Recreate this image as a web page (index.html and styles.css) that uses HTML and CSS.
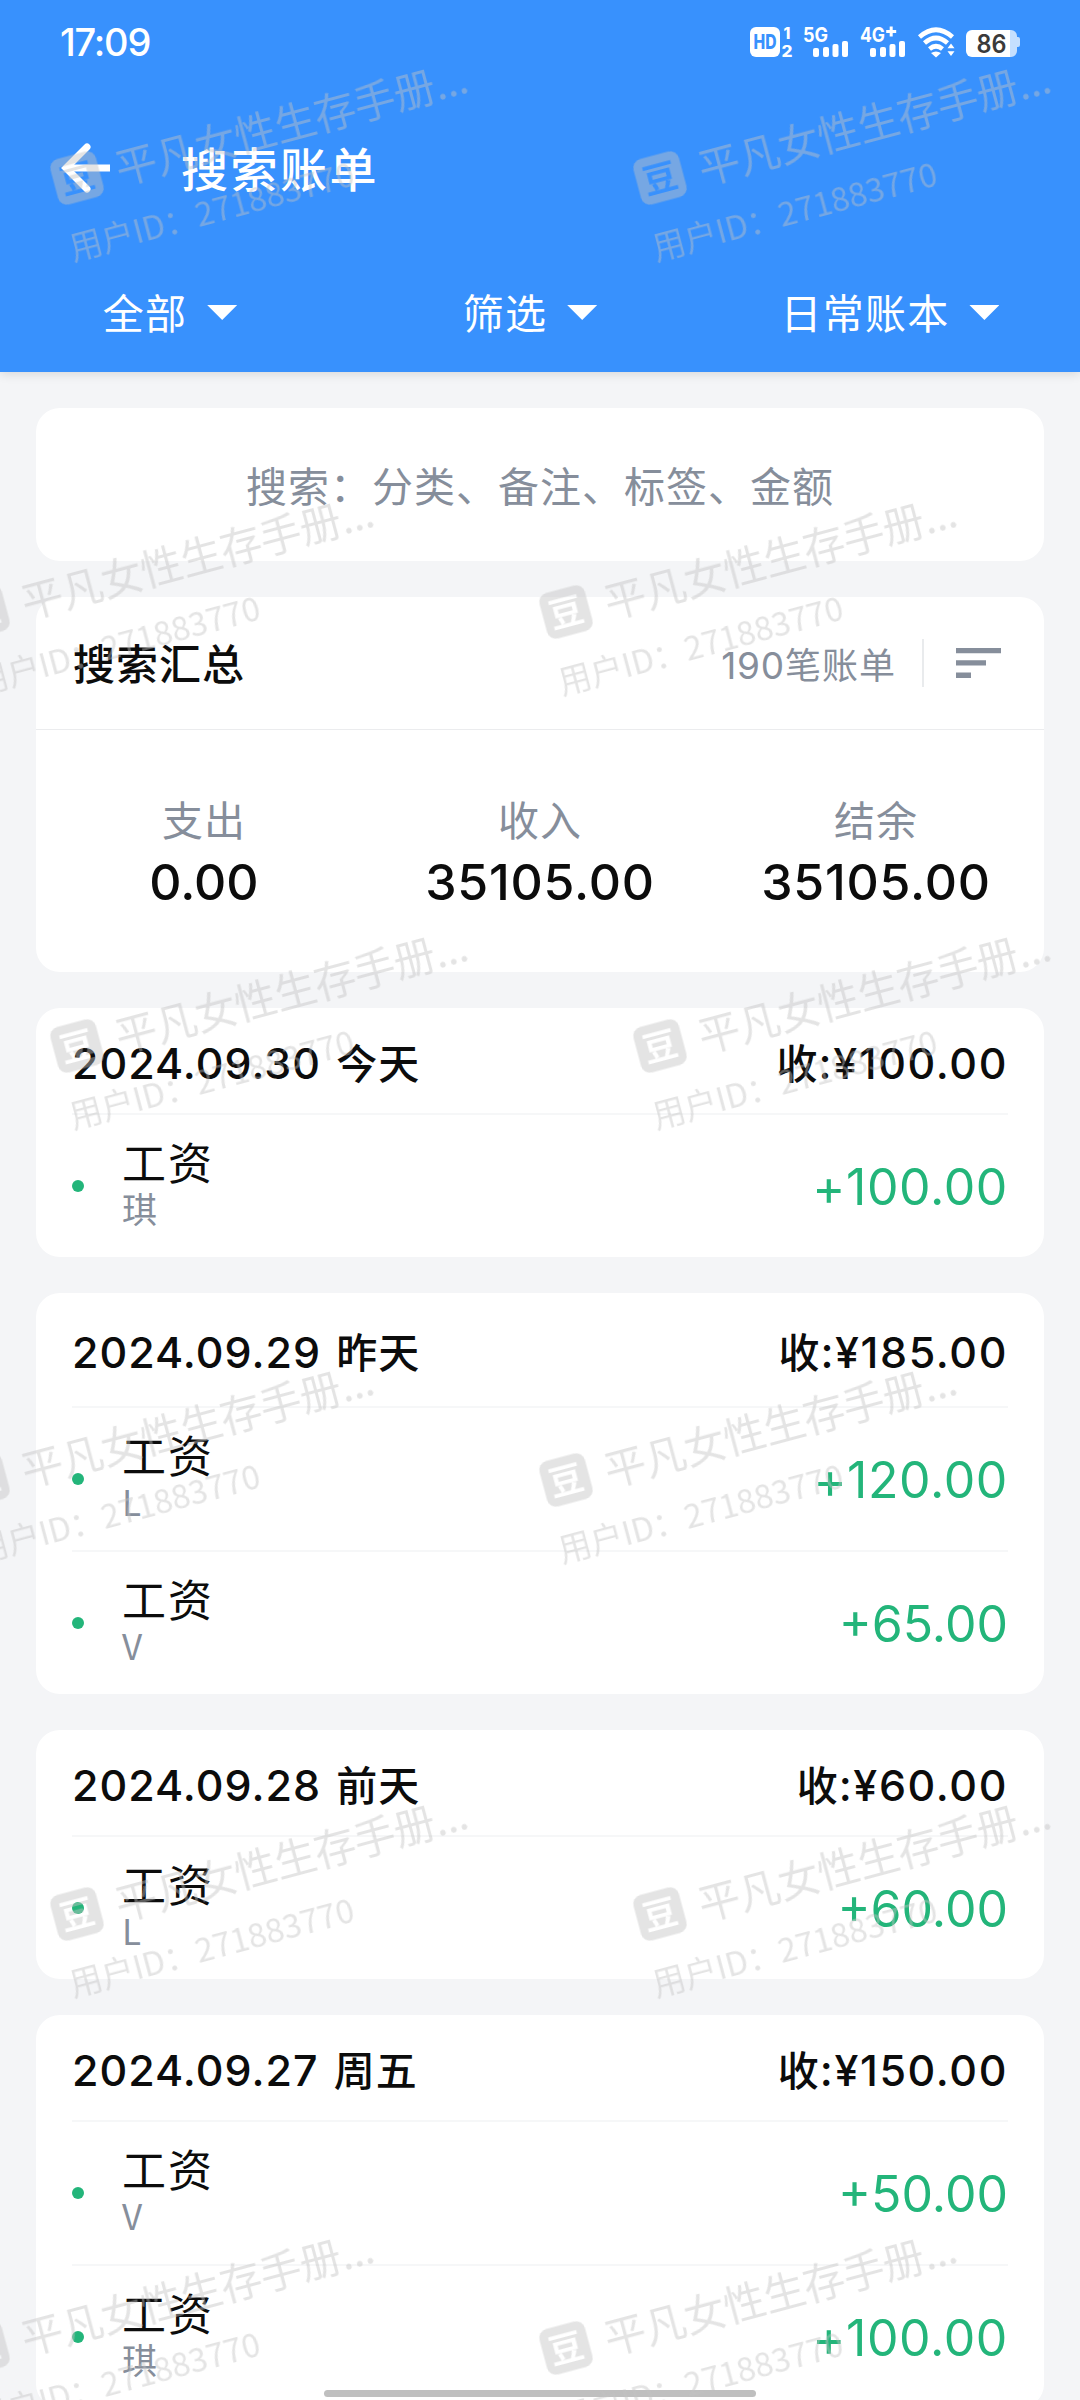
FILE: index.html
```html
<!DOCTYPE html>
<html lang="zh-CN">
<head>
<meta charset="utf-8">
<title>搜索账单</title>
<link rel="stylesheet" href="styles.css">
</head>
<body>
<div class="screen">
  <header class="header">
    <div class="status">
      <span class="time">17:09</span>
      <svg class="status-icons" width="276" height="36" viewBox="748 24 276 36">
        <rect x="750" y="27" width="30" height="30" rx="6" fill="#fff"/>
        <text class="st-hd" x="765" y="49" text-anchor="middle" textLength="23" lengthAdjust="spacingAndGlyphs">HD</text>
        <text class="st-num" x="787" y="38.500" text-anchor="middle">1</text>
        <text class="st-num" x="787" y="57" text-anchor="middle" textLength="11" lengthAdjust="spacingAndGlyphs">2</text>
        <text class="st-net" x="803" y="42" textLength="25" lengthAdjust="spacingAndGlyphs">5G</text>
        <g fill="#fff">
          <rect x="813" y="48" width="6" height="9" rx="2"/><rect x="823" y="47" width="6" height="10" rx="2"/><rect x="832.500" y="44" width="6" height="13" rx="2"/><rect x="842" y="41" width="6" height="16" rx="2"/>
          <rect x="870" y="48" width="6" height="9" rx="2"/><rect x="880" y="47" width="6" height="10" rx="2"/><rect x="889.500" y="44" width="6" height="13" rx="2"/><rect x="899" y="41" width="6" height="16" rx="2"/>
          <path d="M891.200 26.500v10M886.200 31.500h10" stroke="#fff" stroke-width="3"/>
        </g>
        <text class="st-net" x="860" y="42" textLength="25" lengthAdjust="spacingAndGlyphs">4G</text>
        <g fill="none" stroke="#fff" stroke-width="4.600">
          <path d="M919.500 37Q936 22.500 952.500 37"/>
          <path d="M924.500 43Q936 33 947.500 43"/>
          <path d="M929.500 49Q936 43.500 942.500 49"/>
        </g>
        <path d="M931 53Q936 50 941 53L936 57.500ZM951 43.500l3.500 4.800h-7ZM951 56l3.500-4.800h-7Z" fill="#fff"/>
        <path d="M1010 30h1a6 6 0 0 1 6 6v1h1a2 2 0 0 1 2 2v6a2 2 0 0 1-2 2h-1v4a6 6 0 0 1-6 6h-1Z" fill="#c5dffe"/>
        <path d="M972 30h38v27h-38a6 6 0 0 1-6-6V36a6 6 0 0 1 6-6Z" fill="#fff"/>
        <text class="st-bat" x="991.500" y="52.500" text-anchor="middle" textLength="30" lengthAdjust="spacingAndGlyphs">86</text>
      </svg>
    </div>
    <div class="titlebar">
      <svg class="back" width="50" height="52" viewBox="0 0 50 52" fill="none" stroke="#fff" stroke-width="7"><path d="M5 26H49"/><path d="M26 5L5 26L26 47" stroke-linecap="round" stroke-linejoin="miter"/></svg>
      <h1 class="title">搜索账单</h1>
    </div>
    <nav class="tabs">
      <div class="tab"><span>全部</span><i class="caret"></i></div>
      <div class="tab"><span>筛选</span><i class="caret"></i></div>
      <div class="tab"><span>日常账本</span><i class="caret"></i></div>
    </nav>
  </header>
  <main class="content">
    <div class="card search">搜索：分类、备注、标签、金额</div>
    <section class="card summary">
      <div class="summary-head">
        <span class="summary-title">搜索汇总</span>
        <span class="count"><span class="num">190</span>笔账单</span>
        <i class="vline"></i>
        <svg width="45" height="30" viewBox="0 0 45 30" fill="#868e9b"><path d="M0 0h45v5.300H0ZM0 12.300h30v5.300H0ZM0 24.600h15v5.300H0Z"/></svg>
      </div>
      <div class="totals">
        <div class="total"><span class="label">支出</span><span class="value">0.00</span></div>
        <div class="total"><span class="label">收入</span><span class="value wide">35105.00</span></div>
        <div class="total"><span class="label">结余</span><span class="value wide">35105.00</span></div>
      </div>
    </section>
    <section class="card day">
      <div class="day-head"><span class="date"><span class="num">2024.09.30</span> 今天</span><span class="sum">收<span class="num">:¥100.00</span></span></div>
      <div class="item"><i class="dot"></i><div class="desc"><span class="name">工资</span><span class="note">琪</span></div><span class="amount">+100.00</span></div>
    </section>
    <section class="card day tall">
      <div class="day-head"><span class="date"><span class="num">2024.09.29</span> 昨天</span><span class="sum">收<span class="num">:¥185.00</span></span></div>
      <div class="item"><i class="dot"></i><div class="desc"><span class="name">工资</span><span class="note">L</span></div><span class="amount">+120.00</span></div>
      <div class="item"><i class="dot"></i><div class="desc"><span class="name">工资</span><span class="note">V</span></div><span class="amount short">+65.00</span></div>
    </section>
    <section class="card day">
      <div class="day-head"><span class="date"><span class="num">2024.09.28</span> 前天</span><span class="sum">收<span class="num">:¥60.00</span></span></div>
      <div class="item"><i class="dot"></i><div class="desc"><span class="name">工资</span><span class="note">L</span></div><span class="amount short">+60.00</span></div>
    </section>
    <section class="card day">
      <div class="day-head"><span class="date"><span class="num">2024.09.27</span> 周五</span><span class="sum">收<span class="num">:¥150.00</span></span></div>
      <div class="item"><i class="dot"></i><div class="desc"><span class="name">工资</span><span class="note">V</span></div><span class="amount short">+50.00</span></div>
      <div class="item"><i class="dot"></i><div class="desc"><span class="name">工资</span><span class="note">琪</span></div><span class="amount">+100.00</span></div>
    </section>
  </main>
  <div class="gesture"></div>
  <svg class="watermark" width="1080" height="2400" viewBox="0 0 1080 2400">
    <defs>
      <mask id="knock"><rect x="-30" y="-30" width="60" height="60" fill="#fff"/><text class="wm-logo" x="0" y="12.500" text-anchor="middle" fill="#000">豆</text></mask>
      <g id="mark" transform="rotate(-15)">
        <rect x="-23.500" y="-23.500" width="47" height="47" rx="9" mask="url(#knock)"/>
        <text class="wm-name" x="40" y="18">平凡女性生存手册...</text>
        <text class="wm-id" x="-25" y="79">用户ID：271883770</text>
      </g>
    </defs>
    <g class="wm-fill">
      <use href="#mark" x="77" y="178"/><use href="#mark" x="660" y="178"/>
      <use href="#mark" x="-17" y="612"/><use href="#mark" x="566" y="612"/>
      <use href="#mark" x="77" y="1046"/><use href="#mark" x="660" y="1046"/>
      <use href="#mark" x="-17" y="1480"/><use href="#mark" x="566" y="1480"/>
      <use href="#mark" x="77" y="1914"/><use href="#mark" x="660" y="1914"/>
      <use href="#mark" x="-17" y="2348"/><use href="#mark" x="566" y="2348"/>
    </g>
  </svg>
</div>
</body>
</html>
```
FILE: styles.css
```css
* { box-sizing: border-box; }
body { margin: 0; font-family: "Noto Sans CJK SC", sans-serif; background: #f4f5f7; }
.screen { position: relative; width: 1080px; height: 2400px; overflow: hidden; color: #0c0c0c; white-space: nowrap; }

.header { height: 372px; background: #3891fd; color: #fff; box-shadow: 0 2px 10px rgba(0, 0, 0, .12); }
.status { display: flex; justify-content: space-between; align-items: center; height: 84px; padding: 0 56px 0 60px; }
.time { font: 500 38px/44px Inter, sans-serif; letter-spacing: -1.200px; }
.status-icons text { font-family: Inter, sans-serif; font-weight: 700; fill: #fff; }
.status-icons .st-hd { font-size: 20px; font-weight: 800; fill: #3891fd; }
.status-icons .st-num { font-size: 15.500px; font-weight: 800; }
.status-icons .st-net { font-size: 20px; }
.status-icons .st-bat { font-size: 25px; font-weight: 600; fill: #3a3a3a; }

.titlebar { display: flex; align-items: center; height: 168px; gap: 70px; padding-left: 61px; }
.title { margin: 0; padding-bottom: 2px; font-size: 47px; line-height: 60px; font-weight: 500; letter-spacing: 2.500px; }
.tabs { display: grid; grid-template-columns: repeat(3, 360px); height: 120px; }
.tab { display: flex; justify-content: center; align-items: center; gap: 20px; height: 120px; padding-right: 20px; font-size: 41px; line-height: 50px; letter-spacing: 1.200px; }
.tab span { padding-bottom: 3px; }
.caret { width: 30px; height: 15px; margin-top: 1px; background: #fff; clip-path: polygon(0 0, 100% 0, 50% 100%); }

.content { display: flex; flex-direction: column; gap: 36px; padding: 36px; }
.card { flex: none; background: #fff; border-radius: 24px; }
.search { height: 153px; line-height: 153px; text-align: center; font-size: 41px; letter-spacing: 1px; color: #868e9b; }

.summary { height: 375px; }
.summary-head { display: flex; align-items: center; height: 133px; padding: 0 43px 0 37px; border-bottom: 1px solid #ebecee; }
.summary-title { flex: 1; padding-bottom: 3px; font-size: 42px; font-weight: 500; letter-spacing: 1px; }
.count { font-size: 36px; letter-spacing: 1px; color: #868e9b; }
.count .num { font-family: Inter, sans-serif; font-size: 37px; letter-spacing: .8px; }
.vline { width: 2px; height: 48px; margin: 0 32px 0 26px; background: #e9ebed; }
.totals { display: grid; grid-template-columns: repeat(3, 336px); padding-top: 57px; }
.total { display: flex; flex-direction: column; align-items: center; }
.label { font-size: 41px; line-height: 62px; letter-spacing: 1px; padding-bottom: 2px; color: #868e9b; }
.value { font: 500 50px/62px Inter, sans-serif; }
.value.wide { letter-spacing: .8px; }

.day { padding: 0 36px; }
.day-head { display: flex; justify-content: space-between; align-items: center; height: 105px; font-size: 41px; font-weight: 500; letter-spacing: 1px; }
.tall .day-head { height: 113px; }
.day-head .num { font-family: Inter, "Noto Sans CJK SC", sans-serif; font-size: 43px; }
.date { word-spacing: 5px; }
.sum .num { letter-spacing: 1.600px; }
.item { display: flex; align-items: center; height: 144px; border-top: 2px solid #f6f7f8; }
.dot { width: 12px; height: 12px; border-radius: 50%; background: #23b57a; }
.desc { flex: 1; display: flex; flex-direction: column; padding: 0 0 8px 38px; }
.name { font-size: 44px; line-height: 52px; letter-spacing: 2px; }
.note { font-size: 35px; line-height: 42px; color: #868e9b; }
.amount { padding-top: 2px; font: 400 50px/60px Inter, sans-serif; letter-spacing: .6px; color: #23b57a; }
.amount.short { letter-spacing: 0; }

.gesture { position: absolute; left: 324px; top: 2390px; width: 432px; height: 7px; border-radius: 4px; background: #bfbfbf; }
.watermark { position: absolute; left: 0; top: 0; pointer-events: none; }
.wm-fill { fill: #c3c3c3; opacity: .45; }
.wm-logo { font-size: 34px; font-weight: 700; }
.wm-name { font-size: 41.500px; font-weight: 400; letter-spacing: -.4px; }
.wm-id { font-size: 32.800px; font-weight: 400; letter-spacing: -.1px; }
```
